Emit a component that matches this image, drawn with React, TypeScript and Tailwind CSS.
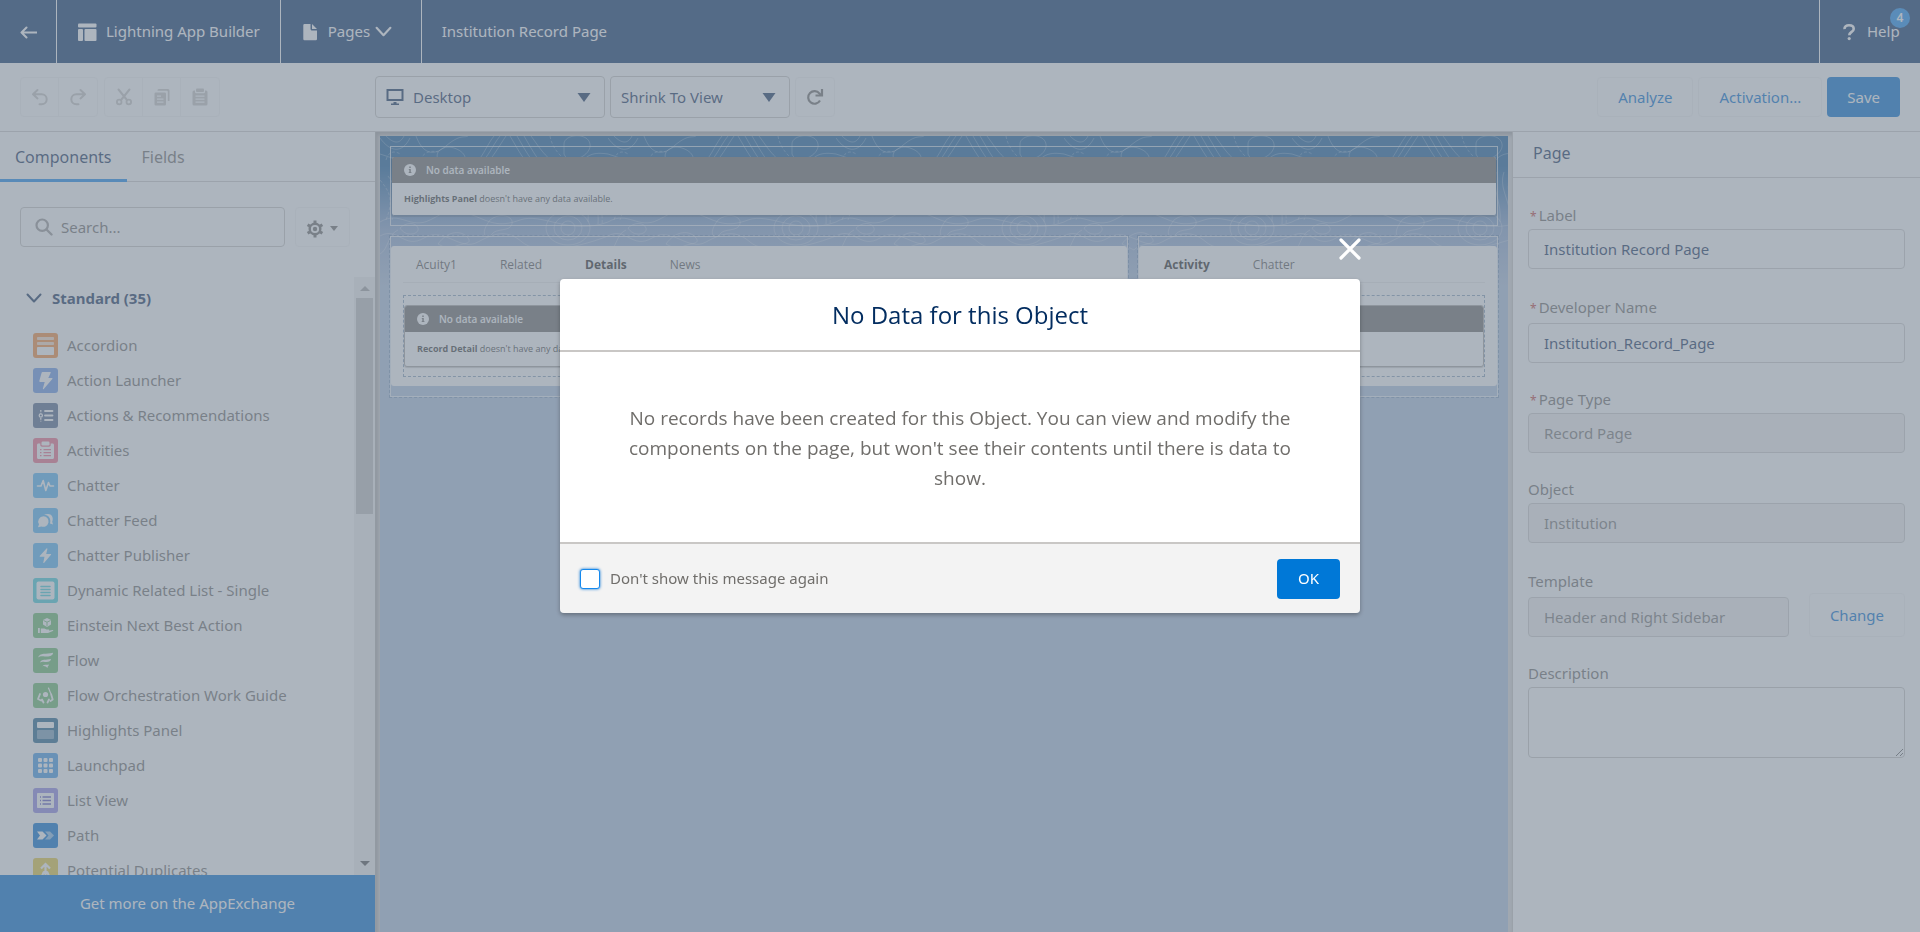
import type { ReactNode } from 'react';

type IconProps = { children: ReactNode; className?: string; box?: string };

function Glyph({ children, className = 'size-4', box = '0 0 24 24' }: IconProps) {
  return (
    <svg viewBox={box} className={`shrink-0 ${className}`} fill="none" aria-hidden="true">
      {children}
    </svg>
  );
}

const strokeProps = {
  stroke: 'currentColor',
  strokeLinecap: 'round' as const,
  strokeLinejoin: 'round' as const,
};

function ChevronDown({ className }: { className?: string }) {
  return (
    <Glyph className={className} box="0 0 16 16">
      <path d="M1.5 4.5 8 11.5l6.5-7" {...strokeProps} strokeWidth="2" />
    </Glyph>
  );
}

function UndoIcon({ flip = false }: { flip?: boolean }) {
  return (
    <Glyph className={flip ? 'size-[18px] -scale-x-100' : 'size-[18px]'} box="0 0 18 18">
      <path d="M6.5 2 2 6.2l4.5 4.2M2.5 6.2h8.2a5 5 0 0 1 0 10H8.5" {...strokeProps} strokeWidth="2" />
    </Glyph>
  );
}

function CutIcon() {
  return (
    <Glyph className="size-[18px]" box="0 0 18 18">
      <path d="M3.500 1.500 12 12M14.500 1.500 6 12" {...strokeProps} strokeWidth="2" />
      <circle cx="4.200" cy="14" r="2.300" stroke="currentColor" strokeWidth="1.800" />
      <circle cx="13.800" cy="14" r="2.300" stroke="currentColor" strokeWidth="1.800" />
    </Glyph>
  );
}

function CopyIcon() {
  return (
    <Glyph className="size-[18px]" box="0 0 18 18">
      <path d="M6 1h9a1.500 1.500 0 0 1 1.500 1.500V13h-1.700V3.800a1 1 0 0 0-1-1H4.500A1.500 1.500 0 0 1 6 1z" fill="currentColor" />
      <path
        fillRule="evenodd"
        d="M2.800 4.500h8.800A1.300 1.300 0 0 1 13 5.800v10.400a1.300 1.300 0 0 1-1.300 1.300H2.800a1.300 1.300 0 0 1-1.300-1.300V5.800a1.300 1.300 0 0 1 1.300-1.300zM4 7.500v1.300h4V7.500zm0 3v1.300h6.500v-1.300zm0 3v1.300h6.500v-1.300z"
        fill="currentColor"
      />
    </Glyph>
  );
}

function PasteIcon() {
  return (
    <Glyph className="size-[18px]" box="0 0 18 18">
      <path d="M6 .5h6a1 1 0 0 1 1 1V3a1 1 0 0 1-1 1H6a1 1 0 0 1-1-1V1.500a1 1 0 0 1 1-1z" fill="currentColor" />
      <path
        fillRule="evenodd"
        d="M3 2.500h1V4a1.300 1.300 0 0 0 1.300 1.300h7.400A1.300 1.300 0 0 0 14 4V2.500h1A1.500 1.500 0 0 1 16.500 4v12a1.500 1.500 0 0 1-1.500 1.500H3A1.500 1.500 0 0 1 1.500 16V4A1.500 1.500 0 0 1 3 2.500zM4.500 7.500v1.300h9V7.500zm0 3v1.300h9v-1.300zm0 3v1.300h9v-1.300z"
        fill="currentColor"
      />
    </Glyph>
  );
}

function RefreshIcon() {
  return (
    <Glyph className="size-[18px] text-[#706e6b]" box="0 0 18 18">
      <path d="M14 12.500A6.300 6.300 0 1 1 13.500 5.600L15 7" stroke="currentColor" strokeWidth="2.200" />
      <path d="M16 1v6.500H9.500" stroke="currentColor" strokeWidth="2.200" />
    </Glyph>
  );
}

function InfoIcon() {
  return (
    <Glyph className="size-3" box="0 0 12 12">
      <circle cx="6" cy="6" r="6" fill="#fff" />
      <path d="M5.200 2.500h1.600V4H5.200zM4.800 5h2v3h.6v1H4.700V8h.6V6h-.5z" fill="#706e6b" />
    </Glyph>
  );
}

const W = '#fff';

const components: { name: string; tile: string; art: ReactNode }[] = [
  {
    name: 'Accordion',
    tile: 'bg-[#f88f3a]',
    art: (
      <>
        <rect x="4" y="4" width="17" height="3" rx=".8" fill={W} opacity=".7" />
        <rect x="4" y="9" width="17" height="3" rx=".8" fill={W} opacity=".7" />
        <rect x="4" y="14" width="17" height="8" rx=".8" fill={W} />
      </>
    ),
  },
  {
    name: 'Action Launcher',
    tile: 'bg-[#6b9ae8]',
    art: <path d="M9.500 4h7.700c.5 0 .7.400.5.800L15.300 10h3.600c.5 0 .7.600.4 1l-8.600 10c-.4.400-1 .1-.8-.4L11.700 14H7c-.5 0-.8-.4-.7-.9L8.700 4.600c.1-.4.400-.6.800-.6z" fill={W} />,
  },
  {
    name: 'Actions & Recommendations',
    tile: 'bg-[#54698d]',
    art: (
      <>
        <path d="M12 8h7.500M12 12.500h7.500M12 17h7.500" stroke={W} strokeWidth="1.800" strokeLinecap="round" />
        <circle cx="7.800" cy="12.500" r="1.600" stroke={W} strokeWidth="1.300" />
        <path d="M7.800 7v3.500M7.800 15v3.500" stroke={W} strokeWidth="1.300" strokeDasharray="1.800 1" />
      </>
    ),
  },
  {
    name: 'Activities',
    tile: 'bg-[#f0708a]',
    art: (
      <>
        <rect x="8.500" y="3.500" width="8" height="4" rx="1.200" fill={W} />
        <path
          fillRule="evenodd"
          d="M5.500 5.500h1.800V7c0 1 .7 1.700 1.700 1.700h7c1 0 1.700-.7 1.700-1.700V5.500h1.800c.9 0 1.500.6 1.500 1.500v12.500c0 .9-.6 1.500-1.500 1.500h-14c-.9 0-1.500-.6-1.500-1.500V7c0-.9.600-1.500 1.500-1.500zM7 11v1.200h1.500V11zm3.500 0v1.200h7.500V11zM7 14v1.200h1.500V14zm3.500 0v1.200h7.500V14zM7 17v1.200h1.500V17zm3.500 0v1.200h7.500V17z"
          fill={W}
        />
      </>
    ),
  },
  {
    name: 'Chatter',
    tile: 'bg-[#57b7f5]',
    art: <path d="M4.500 13H8l2.200-5.500 2.600 10 2.700-8L17 13h3.500" stroke={W} strokeWidth="1.600" strokeLinecap="round" strokeLinejoin="round" />,
  },
  {
    name: 'Chatter Feed',
    tile: 'bg-[#57b7f5]',
    art: (
      <>
        <path d="M10.500 8.200a5.300 5.300 0 1 1-2.200 10.200L5 19.300l1-3a5.300 5.300 0 0 1 4.500-8.100z" fill={W} />
        <path d="M11 6.800C15.500 6.700 18.500 11 17 15.500l3 1-.8-2.800C21 9.500 18.500 6 15 6c-1.600 0-3 .3-4 .8z" fill={W} />
      </>
    ),
  },
  {
    name: 'Chatter Publisher',
    tile: 'bg-[#57b7f5]',
    art: <path d="m13.500 5.500-6.800 7.600c-.2.300 0 .6.300.6h4.500l-1.200 5.800c-.1.600.4.700.7.400l7-8.200c.3-.3.100-.7-.3-.7h-4.500l1.200-5c.1-.6-.5-.9-.9-.5z" fill={W} />,
  },
  {
    name: 'Dynamic Related List - Single',
    tile: 'bg-[#45cfdb]',
    art: (
      <>
        <rect x="3.500" y="3.500" width="18" height="18" rx="2" fill={W} />
        <path d="M8 8.500h9M8 11.500h9M8 14.500h9M8 17.500h9" stroke="#45cfdb" strokeWidth="1.500" strokeLinecap="round" />
      </>
    ),
  },
  {
    name: 'Einstein Next Best Action',
    tile: 'bg-[#6bbd6e]',
    art: (
      <>
        <path d="m14 5 4 2v4.500l-4 2.500-4-2.500V7z" fill={W} />
        <path d="m10.500 7.500 3.500 1.700 3.500-1.700M14 9.200v4" stroke="#6bbd6e" strokeWidth=".9" />
        <path d="M5 15h1.800v5H5zM7.800 15.500h3.500l2.200 1h2.200c.7 0 .7 1 0 1.200l4-.8c.8 0 .9.800.2 1.200L15 20H7.800z" fill={W} />
      </>
    ),
  },
  {
    name: 'Flow',
    tile: 'bg-[#6bbd6e]',
    art: (
      <path
        d="M5 9.500C7 4.500 13 6.500 20 4.800c0 3-3.500 4.200-8 3.700-3-.3-5-.6-7 1zM7 14.500c1.500-3.800 6-2.300 11-3.500 0 2.500-3 3.300-6 2.900-2.300-.3-3.500-.5-5 .6zM9.500 18.500c1-2.500 3.500-1.200 6.500-2-.2 1.500-1.500 1.600-1.500 3.500-1.500-1.500-3.500-2.500-5-1.500z"
        fill={W}
      />
    ),
  },
  {
    name: 'Flow Orchestration Work Guide',
    tile: 'bg-[#6bbd6e]',
    art: (
      <>
        <circle cx="12.500" cy="11.500" r="2.600" fill={W} />
        <path d="m10.500 19.500-1.500-3M14.500 19.500l1.500-3M8 17.500l-3-1.500 2-5M17.500 18l2.200-1.500-1.500-5" stroke={W} strokeWidth="1.800" strokeLinecap="round" strokeLinejoin="round" />
        <path d="m18 11-2.500-6" stroke={W} strokeWidth="1.200" strokeLinecap="round" />
      </>
    ),
  },
  {
    name: 'Highlights Panel',
    tile: 'bg-[#22658f]',
    art: (
      <>
        <rect x="4" y="4" width="17" height="6" rx="1" fill={W} />
        <rect x="4" y="12" width="17" height="9" rx="1" fill={W} opacity=".4" />
      </>
    ),
  },
  {
    name: 'Launchpad',
    tile: 'bg-[#449be8]',
    art: (
      <>
        {[5, 10.5, 16].map((y) =>
          [5, 10.5, 16].map((x) => <rect key={`${x}-${y}`} x={x} y={y} width="4" height="4" rx="1" fill={W} />),
        )}
      </>
    ),
  },
  {
    name: 'List View',
    tile: 'bg-[#9089e5]',
    art: (
      <>
        <rect x="4" y="5" width="17" height="15" rx=".8" fill={W} />
        <path d="M9.500 9h8.500M9.500 12.500h8.500M9.500 16h8.500M7 9h1M7 12.500h1M7 16h1" stroke="#5f5ac0" strokeWidth="1.300" />
      </>
    ),
  },
  {
    name: 'Path',
    tile: 'bg-[#0070d2]',
    art: (
      <>
        <path d="M4 8.500h5.500l4 4-4 4H4l3-4z" fill={W} />
        <path d="M12 8.500h5l4 4-4 4h-5l3.500-4z" fill={W} opacity=".55" />
      </>
    ),
  },
  {
    name: 'Potential Duplicates',
    tile: 'bg-[#e5c93f]',
    art: <path d="m8 10.500 4.500-4.500 4.500 4.500M12.500 7v14M12.500 13c-2.500 1-3.500 3-3.500 8M12.500 13c2.500 1 3.500 3 3.500 8" stroke={W} strokeWidth="2.200" />,
  },
];

const toolButton = 'flex h-[38px] w-[38px] items-center justify-center text-[#c9c7c5]';
const inputBase = 'h-10 w-full min-w-0 rounded border border-[#d0cecc] px-[15px] text-[15px]';
const inputBox = `${inputBase} bg-white text-[#16325c]`;
const disabledBox = `${inputBase} bg-[#f3f2f2] text-[#7a7876]`;
const quietButton = 'rounded border border-[#f3f3f3]';

function TopBar() {
  return (
    <header className="flex h-[63px] shrink-0 bg-[#0b3268] text-[15px] text-white">
      <a href="#back" aria-label="Back" className="flex w-[57px] items-center justify-center border-r border-white">
        <Glyph className="size-[18px]" box="0 0 18 18">
          <path d="M7.500 4.500 2.500 9.500l5 5M2.500 9.500h15" {...strokeProps} strokeWidth="2" />
        </Glyph>
      </a>
      <div className="flex items-center gap-[9px] border-r border-white px-5 whitespace-nowrap">
        <Glyph className="size-5" box="0 0 20 20">
          <rect x="1" y="1.500" width="18.500" height="4" rx="1" fill="#fff" />
          <rect x="1" y="7" width="5" height="12" rx="1" fill="#fff" />
          <rect x="7.500" y="7" width="12" height="12" rx="1" fill="#fff" />
        </Glyph>
        <span>Lightning App Builder</span>
      </div>
      <button type="button" className="flex w-[141px] items-center border-r border-white pl-5">
        <Glyph className="size-[18px]" box="0 0 18 18">
          <path d="M3.500 1h6v5c0 .8.700 1.500 1.500 1.500h5v8.500a1.200 1.200 0 0 1-1.200 1.200H3.500a1.200 1.200 0 0 1-1.200-1.200V2.200A1.200 1.200 0 0 1 3.500 1zM11 1l5 5h-5z" fill="#fff" />
        </Glyph>
        <span className="ml-[9px]">Pages</span>
        <ChevronDown className="ml-[5px] size-[17px]" />
      </button>
      <h1 className="flex flex-1 items-center pl-5">Institution Record Page</h1>
      <a href="#help" className="flex w-[101px] items-center border-l border-white pl-[22px]">
        <Glyph className="h-[18px] w-[14px]" box="0 0 14 18">
          <path d="M2.500 6.200C2.300 3.500 4.300 2.200 7 2.200s4.700 1.300 4.700 3.700c0 3-4.400 3-4.400 6.300" stroke="#fff" strokeWidth="2.600" />
          <circle cx="7.200" cy="15.600" r="1.600" fill="#fff" />
        </Glyph>
        <span className="relative ml-[11px]">
          <span className="absolute -top-[12px] left-[23px] flex size-5 items-center justify-center rounded-full bg-[#1b8ff0] text-xs font-semibold">4</span>
          <span className="relative">Help</span>
        </span>
      </a>
    </header>
  );
}

function Caret() {
  return (
    <Glyph className="pointer-events-none absolute top-[17px] right-[14px] h-[9px] w-[14px]" box="0 0 14 9">
      <path d="M.5 0h13L7 9z" fill="currentColor" />
    </Glyph>
  );
}

function Toolbar() {
  return (
    <div className="flex h-[69px] shrink-0 items-center border-b border-[#d0cecc] bg-white text-[15px]">
      <div className="flex w-[375px] shrink-0 gap-[6px] pl-5">
        <div className="flex divide-x divide-[#f3f3f3] rounded border border-[#f3f3f3]">
          <button type="button" aria-label="Undo" className={toolButton}><UndoIcon /></button>
          <button type="button" aria-label="Redo" className={toolButton}><UndoIcon flip /></button>
        </div>
        <div className="flex divide-x divide-[#f3f3f3] rounded border border-[#f3f3f3]">
          <button type="button" aria-label="Cut" className={toolButton}><CutIcon /></button>
          <button type="button" aria-label="Copy" className={toolButton}><CopyIcon /></button>
          <button type="button" aria-label="Paste" className={toolButton}><PasteIcon /></button>
        </div>
      </div>
      <div className="flex flex-1 items-center gap-[5px] text-[#16325c]">
        <div className="relative w-[230px]">
          <select aria-label="Form factor" className="h-[42px] w-full appearance-none rounded border border-[#c9c7c5] bg-white pl-[37px]">
            <option>Desktop</option>
          </select>
          <Glyph className="pointer-events-none absolute top-3 left-[11px] size-[18px]" box="0 0 18 18">
            <rect x="1.500" y="2" width="15" height="10" stroke="currentColor" strokeWidth="2" />
            <path d="M7.500 14h3v1.500H13V17H5v-1.500h2.500z" fill="currentColor" />
          </Glyph>
          <Caret />
        </div>
        <div className="relative w-[180px]">
          <select aria-label="Zoom" className="h-[42px] w-full appearance-none rounded border border-[#c9c7c5] bg-white pl-[10px]">
            <option>Shrink To View</option>
          </select>
          <Caret />
        </div>
        <button type="button" aria-label="Refresh" className={`flex size-10 items-center justify-center ${quietButton}`}>
          <RefreshIcon />
        </button>
      </div>
      <div className="flex gap-[5px] pr-5 text-[#0070d2]">
        <button type="button" className={`h-10 px-5 ${quietButton}`}>Analyze</button>
        <button type="button" className={`h-10 px-5 ${quietButton}`}>Activation...</button>
        <button type="button" className="h-10 rounded bg-[#0070d2] px-5 text-white">Save</button>
      </div>
    </div>
  );
}

function Palette() {
  return (
    <aside className="flex w-[375px] shrink-0 flex-col bg-white">
      <div role="tablist" className="flex h-[50px] shrink-0 border-b border-[#d0cecc] text-base">
        <button type="button" role="tab" aria-selected="true" className="-mb-px border-b-[3px] border-[#1589ee] px-[15px] pt-[2px] text-[#16325c]">Components</button>
        <button type="button" role="tab" aria-selected="false" className="px-[15px] text-[#706e6b]">Fields</button>
      </div>
      <div className="flex shrink-0 gap-[10px] px-5 pt-[25px] pb-[30px]">
        <label className="flex h-10 w-[265px] items-center gap-2 rounded border border-[#c9c7c5] pl-[14px] text-[#9c9a98]">
          <Glyph className="size-[18px]" box="0 0 18 18">
            <circle cx="7.200" cy="7.200" r="5.700" stroke="currentColor" strokeWidth="2.200" />
            <path d="m11.500 11.500 5 5" stroke="currentColor" strokeWidth="2.400" strokeLinecap="round" />
          </Glyph>
          <input type="text" aria-label="Search components" placeholder="Search..." className="w-full min-w-0 text-[15px] outline-none placeholder:text-[#706e6b]" />
        </label>
        <button type="button" aria-label="Component settings" className={`flex h-10 w-[55px] items-center gap-[6px] pt-[3px] pl-[10px] text-[#706e6b] ${quietButton}`}>
          <Glyph className="size-[18px]" box="0 0 18 18">
            <circle cx="9" cy="9" r="5.300" stroke="currentColor" strokeWidth="2.400" />
            <circle cx="9" cy="9" r="2.200" fill="currentColor" />
            <path d="M9 .5v3M9 14.500v3M1.600 4.700l2.600 1.500M13.800 11.800l2.600 1.500M1.600 13.300l2.600-1.500M13.800 6.200l2.600-1.500" stroke="currentColor" strokeWidth="3" />
          </Glyph>
          <Glyph className="h-[5px] w-2" box="0 0 8 5"><path d="M0 0h8L4 5z" fill="currentColor" /></Glyph>
        </button>
      </div>
      <div className="flex min-h-0 flex-1">
        <div className="min-w-0 flex-1 overflow-hidden">
          <button type="button" className="flex items-center gap-[10px] pt-[9px] pl-[26px] text-[15px] leading-6 font-bold text-[#16325c]">
            <ChevronDown className="size-4" />
            Standard (35)
          </button>
          <ul className="mt-[18px]">
            {components.map((item) => (
              <li key={item.name} className="flex h-[35px] items-center gap-[9px] pl-[33px] text-[15px] whitespace-nowrap text-[#706e6b]">
                <span className={`size-[25px] rounded-[3px] ${item.tile}`}>
                  <Glyph className="size-[25px]" box="0 0 25 25">{item.art}</Glyph>
                </span>
                {item.name}
              </li>
            ))}
          </ul>
        </div>
        <div aria-hidden="true" className="flex w-[21px] flex-col items-center justify-between bg-[#f1f1f1] py-[9px]">
          <div className="flex w-[17px] flex-col items-center gap-[7px]">
            <Glyph className="h-[5px] w-[10px]" box="0 0 10 5"><path d="M0 5h10L5 0z" fill="#a3a3a3" /></Glyph>
            <div className="h-[216px] w-full bg-[#c1c1c1]" />
          </div>
          <Glyph className="h-[5px] w-[10px]" box="0 0 10 5"><path d="M0 0h10L5 5z" fill="#505050" /></Glyph>
        </div>
      </div>
      <a href="#appexchange" className="flex h-[57px] shrink-0 items-center justify-center bg-[#0070d2] text-[15px] text-white">Get more on the AppExchange</a>
    </aside>
  );
}

function Contours() {
  return (
    <svg className="absolute inset-0 h-[170px] w-full" aria-hidden="true">
      <defs>
        <pattern id="contours" width="228" height="170" patternUnits="userSpaceOnUse">
          <g fill="none" stroke="#fff" strokeOpacity=".26" strokeWidth="1">
            <path d="M0 2c10 14 22 16 30 0M6 0c8 8 14 8 18 0M36 0c6 16 16 22 30 10S84 2 88 0M92 30c10-6 14-20 22-30M98 30c10-8 14-20 22-30M104 30c9-8 15-20 22-30M130 0c6 10 12 22 20 30M137 0c6 10 12 22 20 30M144 0c6 10 12 22 20 30M151 0c6 8 12 18 20 24" />
            <path d="M184 8c0-10 24-12 26 0s-22 22-26 10zM60 26c-8-8 2-18 14-14s14 12 8 18M200 30c6-12 14-14 28-12M0 18c12 4 20 6 26 12" />
            <path strokeDasharray="3 2" d="M40 24c4-8 10-10 18-8M170 0c2 12 10 20 20 28M6 24c2-8 8-10 14-6M118 30c6-4 14-4 20 0" />
            <path d="M0 86c20-12 30 8 50-2s20-14 40-6 28 14 50 6 50 16 88 2M0 100c18-10 24 14 44 2s36 14 54 4 30-12 44 0 50 8 86-6" />
            <ellipse cx="188" cy="92" rx="7" ry="7" />
            <ellipse cx="188" cy="92" rx="14" ry="12" />
            <ellipse cx="188" cy="92" rx="22" ry="17" />
            <path d="M110 84c10-8 24-4 22 4s-16 4-20 10-14 2-2-14zM58 108c10-14 24-14 30-6s-12 4-18 12zM20 92c6-6 16-6 18 0s-12 10-18 0z" />
            <path strokeDasharray="3 2" d="M0 44c10 12 14 20 6 40M8 40c12 16 10 26 4 44M218 40c-6 20 6 26 4 50" />
            <path d="M212 36c-6 18 8 28 6 52M204 36c-4 20 6 30 4 50M0 118c8-4 8-20 18-24" />
          </g>
        </pattern>
      </defs>
      <rect width="100%" height="170" fill="url(#contours)" />
    </svg>
  );
}

function NoDataCard({ name, framed = false }: { name: string; framed?: boolean }) {
  return (
    <section
      className={`overflow-hidden rounded-[3px] border bg-white shadow-[0_1px_1px_rgba(0,0,0,0.2)] ${
        framed ? 'border-[#a9a7a5]' : 'border-transparent bg-clip-padding'
      }`}
    >
      <h3 className="flex h-[26px] items-center gap-[10px] bg-[#706e6b] pl-3 text-[10px] font-semibold text-white">
        <InfoIcon />
        No data available
      </h3>
      <p className={`pl-3 text-[9px] whitespace-nowrap text-[#3e3e3c] ${framed ? 'leading-[34px]' : 'leading-8'}`}>
        <b>{name}</b> doesn't have any data available.
      </p>
    </section>
  );
}

function TabbedRegion({ tabs, active, card }: { tabs: string[]; active: string; card: string }) {
  return (
    <div className="min-w-0 border border-white/70 pt-[9px] pb-[10px] outline-1 outline-[#3d6591]/40 outline-dashed">
      <div className="rounded-[3px] bg-white px-3 pb-[9px]">
        <div role="tablist" className="flex h-[37px] gap-[43px] border-b border-[#eceaea] pt-px pl-[13px] text-xs text-[#5a5856]">
          {tabs.map((tab) => (
            <button key={tab} type="button" role="tab" aria-selected={tab === active} className={tab === active ? 'font-bold text-[#2b2826]' : ''}>
              {tab}
            </button>
          ))}
        </div>
        <div className="mt-3 border border-dashed border-[#8ba3bd] pt-[9px] pb-[9px]">
          <NoDataCard name={card} framed />
        </div>
      </div>
    </div>
  );
}

function Canvas() {
  return (
    <main className="min-w-0 flex-1 border-l border-[#b5b3b1] bg-[#dddbda] px-[4px] pt-[4px] shadow-[inset_2px_3px_4px_rgba(0,0,0,0.25)]">
      <div className="relative h-full bg-[#b0c4df] bg-[linear-gradient(to_bottom,#195f9c_0px,#195f9c_30px,#8ba7d0_94px,#b0c4df_150px)]">
        <Contours />
        <div className="relative px-[10px] pt-[10px] font-['Open_Sans','Noto_Sans',sans-serif]">
          <div className="border border-white/70 pt-[9px] pb-[9px]">
            <NoDataCard name="Highlights Panel" />
          </div>
          <div className="mt-[10px] grid grid-cols-[738fr_360fr] gap-[10px]">
            <TabbedRegion tabs={['Acuity1', 'Related', 'Details', 'News']} active="Details" card="Record Detail" />
            <TabbedRegion tabs={['Activity', 'Chatter']} active="Activity" card="Activities" />
          </div>
        </div>
      </div>
    </main>
  );
}

type FieldProps = { id: string; label: string; required?: boolean; roomy?: boolean; children: ReactNode };

function Field({ id, label, required = false, roomy = false, children }: FieldProps) {
  return (
    <div className="flex flex-col gap-[3px]">
      <label htmlFor={id} className={`text-[15px] text-[#706e6b] ${roomy ? 'leading-[26px]' : 'leading-[22px]'}`}>
        {required && <span className="mr-[2px] ml-[2px] text-xs text-[#c23934]">*</span>}
        {label}
      </label>
      {children}
    </div>
  );
}

function Properties() {
  return (
    <aside className="w-[408px] shrink-0 border-l border-[#c9c7c5] bg-white">
      <h2 className="flex h-[46px] items-center border-b border-[#d0cecc] pb-1 pl-5 text-base text-[#16325c]">Page</h2>
      <form className="flex flex-col gap-[25px] px-[15px] pt-[26px]">
        <Field id="label" label="Label" required>
          <input id="label" className={inputBox} defaultValue="Institution Record Page" />
        </Field>
        <Field id="developer-name" label="Developer Name" required roomy>
          <input id="developer-name" className={inputBox} defaultValue="Institution_Record_Page" />
        </Field>
        <Field id="page-type" label="Page Type" required>
          <input id="page-type" disabled className={disabledBox} defaultValue="Record Page" />
        </Field>
        <Field id="object" label="Object">
          <input id="object" disabled className={disabledBox} defaultValue="Institution" />
        </Field>
        <Field id="template" label="Template" roomy>
          <div className="flex h-10 items-end gap-5">
            <input id="template" disabled className={disabledBox} defaultValue="Header and Right Sidebar" />
            <button type="button" className={`h-11 shrink-0 px-5 text-[15px] text-[#0070d2] ${quietButton}`}>Change</button>
          </div>
        </Field>
        <Field id="description" label="Description">
          <textarea id="description" className="h-[71px] w-full resize-y rounded border border-[#c9c7c5]" />
        </Field>
      </form>
    </aside>
  );
}

function NoDataDialog() {
  return (
    <div className="fixed inset-0 flex items-center justify-center bg-[rgba(126,140,153,0.64)] pb-10">
      <div role="dialog" aria-modal="true" aria-labelledby="dialog-title" className="relative w-[800px] rounded shadow-[0_2px_4px_rgba(0,0,0,0.3)]">
        <button type="button" aria-label="Close" className="absolute -top-[41px] -right-[1px] text-white">
          <Glyph className="size-[22px]" box="0 0 22 22">
            <path d="m2 2 18 18M20 2 2 20" {...strokeProps} strokeWidth="3.200" />
          </Glyph>
        </button>
        <h2 id="dialog-title" className="flex h-[73px] items-center justify-center rounded-t border-b-2 border-[#c9c7c5] bg-white font-['Open_Sans','Noto_Sans',sans-serif] text-2xl text-[#032d60]">
          No Data for this Object
        </h2>
        <p className="bg-white px-16 pt-[51px] pb-[49px] text-center font-['Open_Sans','Noto_Sans',sans-serif] text-[19px] leading-[30px] text-[#706e6b]">
          No records have been created for this Object. You can view and modify the components on the page, but won't see their contents until there is data to show.
        </p>
        <div className="flex h-[71px] items-center justify-between rounded-b border-t-2 border-[#c9c7c5] bg-[#f3f3f3] px-5 text-[15px]">
          <label className="flex items-center gap-[10px] text-[#706e6b]">
            <input type="checkbox" className="size-5 appearance-none rounded-[3px] border border-[#1589ee] bg-white shadow-[0_0_3px_#0070d2]" />
            Don't show this message again
          </label>
          <button type="button" className="h-10 rounded bg-[#0078d7] px-[21px] text-white">OK</button>
        </div>
      </div>
    </div>
  );
}

export default function App() {
  return (
    <div className="flex h-screen flex-col overflow-hidden bg-white font-['Noto_Sans','Open_Sans',sans-serif]">
      <TopBar />
      <Toolbar />
      <div className="flex min-h-0 flex-1">
        <Palette />
        <Canvas />
        <Properties />
      </div>
      <NoDataDialog />
    </div>
  );
}
